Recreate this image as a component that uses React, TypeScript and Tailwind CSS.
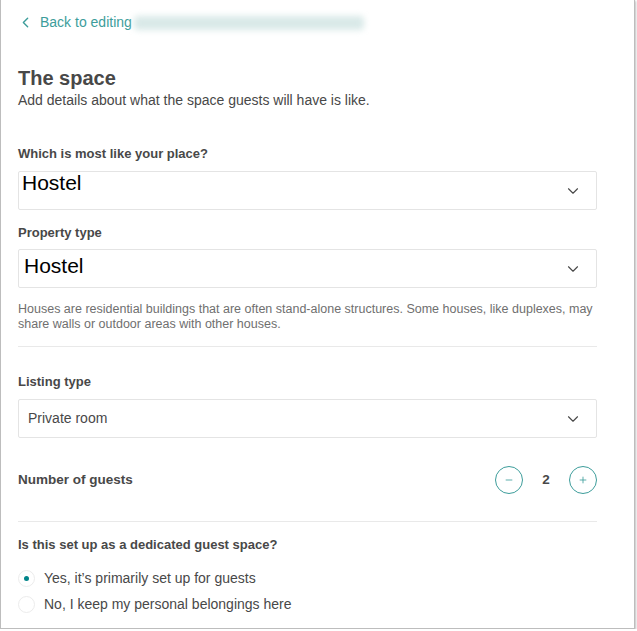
import { ChevronLeft, ChevronDown, Minus, Plus } from "lucide-react";

function SelectBox({
  value,
  big,
  indent,
}: {
  value: string;
  big?: boolean;
  indent: string;
}) {
  return (
    <div className="flex h-[39px] items-center justify-between rounded-[2px] border border-[#e4e4e4] bg-white pr-[14px]">
      {big ? (
        <span className={`${indent} self-start text-[21px] leading-[24px] text-black`}>
          {value}
        </span>
      ) : (
        <span className={`${indent} text-[14px] text-[#484848]`}>{value}</span>
      )}
      <ChevronDown className="text-[#484848]" size={18} strokeWidth={1.5} />
    </div>
  );
}

function StepButton({ children }: { children: React.ReactNode }) {
  return (
    <button className="flex h-[28px] w-[28px] items-center justify-center rounded-full border border-[#3d9d9b] text-[#3d9d9b]">
      {children}
    </button>
  );
}

export default function App() {
  return (
    <div
      className="h-[629px] w-[635px] border-x border-b border-[#bdbdbd] bg-white text-[#484848] shadow-[1px_1px_2px_rgba(0,0,0,0.25)]"
      style={{ fontFamily: '"Liberation Sans", Arial, sans-serif' }}
    >
      <div className="px-[17px]">
        <div className="flex h-[44px] items-center gap-[6px] pt-[1px] text-[14px] text-[#3d9d9b]">
          <ChevronLeft size={17} strokeWidth={2} className="-ml-[1px]" />
          <span>Back to editing</span>
          <span className="-ml-[4px] h-[14px] w-[230px] rounded bg-[#d9e9e8] blur-[3px]" />
        </div>

        <h1 className="mt-[22px] text-[20px] font-bold leading-[24px]">The space</h1>
        <p className="mt-[1px] text-[14px] leading-[18px]">
          Add details about what the space guests will have is like.
        </p>

        <div className="w-[579px]">
          <p className="mt-[36px] text-[13px] font-bold leading-[18px]">
            Which is most like your place?
          </p>
          <div className="mt-[8px]">
            <SelectBox value="Hostel" big indent="pl-[3px] -mt-[1px]" />
          </div>

          <p className="mt-[14px] text-[13px] font-bold leading-[18px]">Property type</p>
          <div className="mt-[7px]">
            <SelectBox value="Hostel" big indent="pl-[5px] pt-[4px]" />
          </div>

          <p className="mt-[14px] text-[12.5px] leading-[15px] text-[#6f6f6f]">
            Houses are residential buildings that are often stand-alone structures. Some houses,
            like duplexes, may share walls or outdoor areas with other houses.
          </p>
          <div className="mt-[14px] h-px bg-[#e9e9e9]" />

          <p className="mt-[26px] text-[13px] font-bold leading-[18px]">Listing type</p>
          <div className="mt-[8px]">
            <SelectBox value="Private room" indent="pl-[9px]" />
          </div>

          <div className="mt-[28px] flex items-center justify-between">
            <p className="text-[13.5px] font-bold">Number of guests</p>
            <div className="flex items-center">
              <StepButton>
                <Minus size={10} strokeWidth={2} />
              </StepButton>
              <span className="w-[46px] text-center text-[13.5px] font-bold">2</span>
              <StepButton>
                <Plus size={10} strokeWidth={2} />
              </StepButton>
            </div>
          </div>

          <div className="mt-[27px] h-px bg-[#e9e9e9]" />

          <p className="mt-[14px] text-[13px] font-bold leading-[18px]">
            Is this set up as a dedicated guest space?
          </p>

          <div className="mt-[14px] flex flex-col gap-[5px] text-[14px]">
            <label className="flex items-center gap-[9px]">
              <span className="flex h-[17px] w-[17px] items-center justify-center rounded-full border border-[#ececec]">
                <span className="h-[5px] w-[5px] rounded-full bg-[#008489]" />
              </span>
              <span>Yes, it’s primarily set up for guests</span>
            </label>
            <label className="flex items-center gap-[9px]">
              <span className="h-[17px] w-[17px] rounded-full border border-[#ececec]" />
              <span>No, I keep my personal belongings here</span>
            </label>
          </div>
        </div>
      </div>
    </div>
  );
}
